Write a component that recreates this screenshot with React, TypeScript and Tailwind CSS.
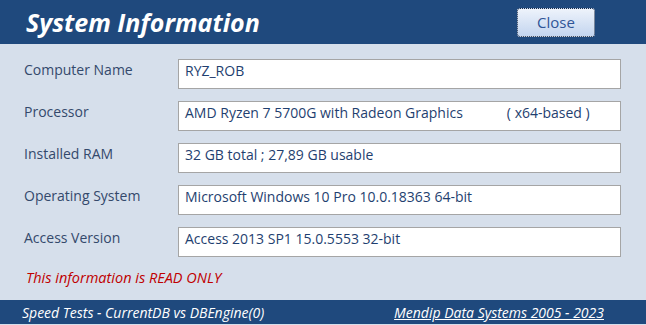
import * as React from "react";

const rows: { label: string; value: React.ReactNode }[] = [
  { label: "Computer Name", value: "RYZ_ROB" },
  {
    label: "Processor",
    value: (
      <>
        AMD Ryzen 7 5700G with Radeon Graphics<span className="ml-[44px]">( x64-based )</span>
      </>
    ),
  },
  { label: "Installed RAM", value: "32 GB total ; 27,89 GB usable" },
  { label: "Operating System", value: "Microsoft Windows 10 Pro 10.0.18363 64-bit" },
  { label: "Access Version", value: "Access 2013 SP1 15.0.5553 32-bit" },
];

export default function App() {
  return (
    <div className="flex h-[325px] w-[646px] flex-col bg-[#d6dfeb] font-['Open_Sans',sans-serif]">
      {/* header */}
      <div className="flex h-[44px] items-center justify-between bg-[#1f497d] pl-[26px] pr-[51px]">
        <h1 className="text-[25px] font-bold italic leading-none text-white">System Information</h1>
        <button className="h-[29px] w-[78px] rounded-[3px] border border-dotted border-[#1a2a44] bg-gradient-to-b from-[#eef3fb] to-[#c3d5ef] text-[15px] text-[#2f5597]">
          Close
        </button>
      </div>

      {/* body */}
      <div className="flex flex-1 flex-col gap-[12px] pl-[24px] pr-[25px] pt-[15px]">
        {rows.map((r) => (
          <div key={r.label} className="flex items-start">
            <div className="w-[154px] pt-0 text-[14px] text-[#34496b]">{r.label}</div>
            <div className="h-[30px] flex-1 border border-[#a5a5a5] bg-white px-[6px] pt-0 text-[14px] text-[#1f3f70] whitespace-pre">
              {r.value}
            </div>
          </div>
        ))}
        <div className="-mt-[2px] pl-[2px] text-[14.5px] italic text-[#c00000]">This information is READ ONLY</div>
      </div>

      {/* footer */}
      <div className="mb-px flex h-[24px] items-center justify-between bg-[#1f497d] pl-[22px] pr-[42px] text-[14px] italic text-white">
        <span>Speed Tests - CurrentDB vs DBEngine(0)</span>
        <span className="underline">Mendip Data Systems 2005 - 2023</span>
      </div>
    </div>
  );
}
